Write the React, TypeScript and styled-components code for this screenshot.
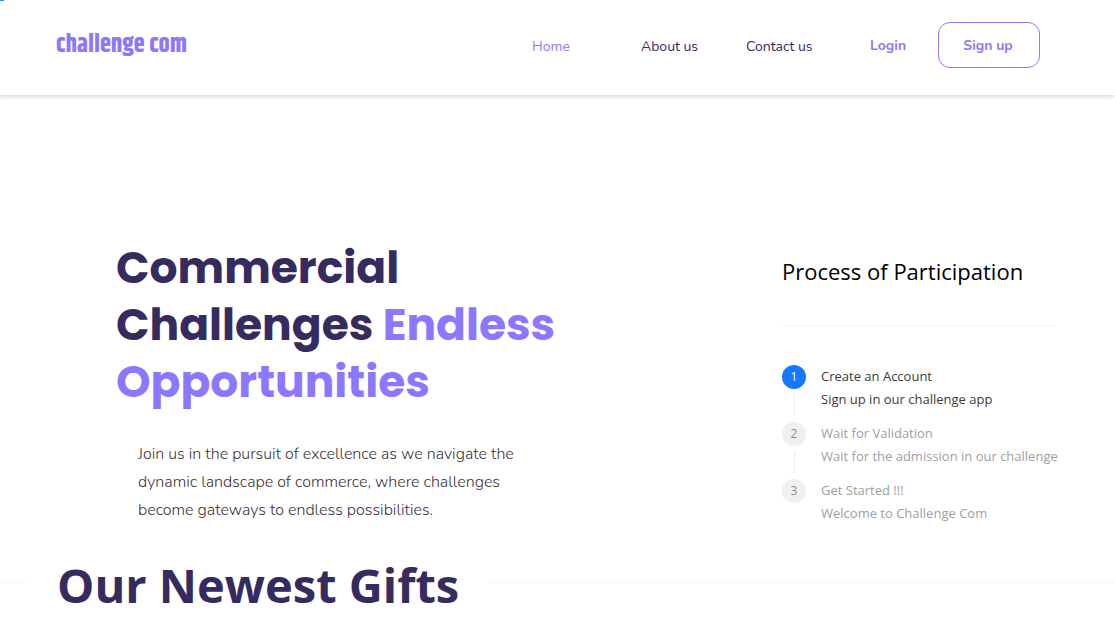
import React from "react";
import styled, { createGlobalStyle } from "styled-components";

const violet = "#8c78ff";
const indigo = "#352b5e";
const rounded = `"Nunito", "Noto Sans", sans-serif`;
const system = `"Segoe UI", "Open Sans", sans-serif`;

const GlobalStyle = createGlobalStyle`
  *, *::before, *::after { box-sizing: border-box; }
  body { margin: 0; background: #fff; font-family: ${rounded}; overflow-x: hidden; }
  h1, h2, p, ol { margin: 0; padding: 0; }
`;

const Progress = styled.div`
  position: absolute;
  top: 0;
  left: 0;
  width: 4px;
  height: 1px;
  background: #1f95f0;
`;

const Header = styled.header`
  display: flex;
  align-items: center;
  justify-content: space-between;
  height: 95px;
  padding: 0 75px 5px 56px;
  box-shadow: 0 2px 4px rgba(0, 0, 0, 0.15);
`;

const Logo = styled.a`
  font-family: "Khand", "Roboto Condensed", "Roboto", sans-serif;
  font-size: 25px;
  font-weight: 700;
  line-height: 32px;
  color: ${violet};
  text-decoration: none;
`;

const Nav = styled.nav`
  display: grid;
  grid-template-columns: 109px 105px 124px 68px 102px;
  align-items: center;
`;

const NavLink = styled.a<{ $active?: boolean; $strong?: boolean }>`
  padding-top: ${(p) => (p.$strong ? 2 : 4)}px;
  font-size: 14px;
  font-weight: ${(p) => (p.$strong ? 700 : 400)};
  line-height: 20px;
  color: ${(p) => (p.$active || p.$strong ? violet : indigo)};
  text-decoration: none;
`;

const SignUp = styled.button`
  height: 46px;
  padding: 2px 2px 0 0;
  border: 1px solid ${violet};
  border-radius: 12px;
  background: #fff;
  color: ${violet};
  font: 700 14px/20px ${rounded};
`;

const Hero = styled.main`
  display: flex;
  justify-content: space-between;
  align-items: flex-start;
  padding: 144px 58px 0 116px;
`;

const Headline = styled.h1`
  font-family: "Poppins", "Inter", sans-serif;
  font-size: 44px;
  font-weight: 700;
  line-height: 57px;
  color: ${indigo};
`;

const Accent = styled.span`
  color: ${violet};
`;

const Lead = styled.p`
  padding: 30px 0 0 22px;
  font-size: 16px;
  font-weight: 300;
  line-height: 28px;
  color: #3d3234;
`;

const Process = styled.section`
  width: 275px;
  padding-top: 14px;
  font-family: ${system};
`;

const ProcessTitle = styled.h2`
  padding-bottom: 36px;
  border-bottom: 1px solid #f5f5f5;
  font-size: 22px;
  font-weight: 400;
  line-height: 36px;
  color: #000;
  white-space: nowrap;
`;

const Steps = styled.ol`
  display: grid;
  gap: 11px;
  padding-top: 39px;
  list-style: none;
`;

const Step = styled.li<{ $active?: boolean }>`
  display: grid;
  grid-template-columns: 24px 1fr;
  column-gap: 15px;
  font-size: 13px;
  line-height: 23px;
  white-space: nowrap;
  color: ${(p) => (p.$active ? "#3b3b3b" : "#a0a0a0")};
`;

const Marker = styled.div`
  display: flex;
  flex-direction: column;
  align-items: center;
  gap: 5px;
`;

const Badge = styled.span<{ $active?: boolean }>`
  width: 24px;
  height: 24px;
  border-radius: 50%;
  background: ${(p) => (p.$active ? "#1677ff" : "#f0f0f0")};
  color: ${(p) => (p.$active ? "#fff" : "#8c8c8c")};
  font-size: 12px;
  line-height: 24px;
  text-align: center;
`;

const Connector = styled.span`
  width: 1px;
  height: 22px;
  margin-bottom: -5px;
  background: #ebebeb;
`;

const GiftsHeading = styled.div`
  display: flex;
  align-items: center;
  padding-top: 20px;
`;

const Rule = styled.span<{ $lead?: boolean }>`
  flex: ${(p) => (p.$lead ? "0 0 27px" : "1")};
  height: 1px;
  margin-bottom: 6px;
  background: #f8f8f8;
`;

const GiftsTitle = styled.h2`
  padding: 0 30px;
  font-family: ${system};
  font-size: 47px;
  font-weight: 700;
  line-height: 80px;
  color: ${indigo};
  white-space: nowrap;
`;

const steps = [
  { title: "Create an Account", detail: "Sign up in our challenge app" },
  { title: "Wait for Validation", detail: "Wait for the admission in our challenge" },
  { title: "Get Started !!!", detail: "Welcome to Challenge Com" },
];

export default function App() {
  return (
    <>
      <GlobalStyle />
      <Progress />
      <Header>
        <Logo href="#">challenge com</Logo>
        <Nav>
          <NavLink href="#" $active>Home</NavLink>
          <NavLink href="#about">About us</NavLink>
          <NavLink href="#contact">Contact us</NavLink>
          <NavLink href="#login" $strong>Login</NavLink>
          <SignUp type="button">Sign up</SignUp>
        </Nav>
      </Header>
      <Hero>
        <div>
          <Headline>
            Commercial<br />
            Challenges <Accent>Endless<br />Opportunities</Accent>
          </Headline>
          <Lead>
            Join us in the pursuit of excellence as we navigate the<br />
            dynamic landscape of commerce, where challenges<br />
            become gateways to endless possibilities.
          </Lead>
        </div>
        <Process>
          <ProcessTitle>Process of Participation</ProcessTitle>
          <Steps>
            {steps.map((step, i) => (
              <Step key={step.title} $active={i === 0}>
                <Marker>
                  <Badge $active={i === 0}>{i + 1}</Badge>
                  {i < steps.length - 1 && <Connector />}
                </Marker>
                <div>
                  <div>{step.title}</div>
                  <div>{step.detail}</div>
                </div>
              </Step>
            ))}
          </Steps>
        </Process>
      </Hero>
      <GiftsHeading>
        <Rule $lead />
        <GiftsTitle>Our Newest Gifts</GiftsTitle>
        <Rule />
      </GiftsHeading>
    </>
  );
}
